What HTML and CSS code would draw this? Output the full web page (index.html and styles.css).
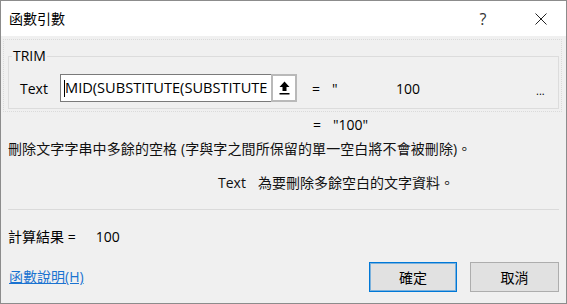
FILE: index.html
```html
<!DOCTYPE html>
<html lang="zh-Hant">
<head>
<meta charset="utf-8">
<title>函數引數</title>
<link rel="stylesheet" href="styles.css">
</head>
<body>
<div class="dialog">
  <div class="titlebar">
    <span class="title">函數引數</span>
    <span class="help">?</span>
    <span class="close">
      <svg width="12" height="12" viewBox="0 0 12 12"><path d="M0.5 0.5 L11.5 11.5 M11.5 0.5 L0.5 11.5" stroke="#222" stroke-width="1" fill="none"/></svg>
    </span>
  </div>

  <div class="focus">
    <fieldset class="group">
      <legend>TRIM</legend>
      <div class="arg">
        <span class="arg-name">Text</span>
        <div class="ref">
          <span class="ref-text"><span class="caret"></span>MID(SUBSTITUTE(SUBSTITUTE</span>
          <span class="ref-btn">
            <svg width="11" height="14" viewBox="0 0 11 14"><path d="M5.5 0.5 L10.5 6 H7.5 V10 H3.5 V6 H0.5 Z" fill="#000"/><rect x="0.5" y="12" width="10" height="1.5" fill="#000"/></svg>
          </span>
        </div>
        <span class="eq">=</span>
        <span class="quote">"</span>
        <span class="num">100</span>
        <span class="more">...</span>
      </div>
    </fieldset>
  </div>

  <div class="result"><span class="eq">=</span><span>"100"</span></div>

  <p class="desc">刪除文字字串中多餘的空格 (字與字之間所保留的單一空白將不會被刪除)。</p>
  <p class="arg-desc"><span class="arg-label">Text</span>為要刪除多餘空白的文字資料。</p>

  <div class="sep"></div>

  <div class="calc"><span>計算結果 =</span><span class="calc-val">100</span></div>

  <div class="footer">
    <a class="help-link" href="#">函數說明(H)</a>
    <button class="btn btn-default">確定</button>
    <button class="btn">取消</button>
  </div>
</div>
</body>
</html>
```

FILE: styles.css
```css
* { margin: 0; padding: 0; box-sizing: border-box; }
html, body { background: #f0f0f0; }
body { font-family: "Open Sans", "Noto Sans CJK TC", sans-serif; font-size: 14px; color: #000; }

.dialog { width: 567px; height: 304px; border: 1px solid #8c8c8c; background: #f0f0f0; }

/* title bar */
.titlebar { height: 35px; background: #fff; display: flex; align-items: center; padding: 0 2px 0 8px; }
.title { flex: 1; font-size: 14px; line-height: 20px; color: #000; }
.help { width: 20px; text-align: center; font-size: 16px; line-height: 20px; color: #333; margin-right: 25px; }
.close { width: 46px; height: 35px; display: flex; align-items: center; justify-content: center; }

/* argument group */
.focus { margin: 3px 4px 0 2px; border: 1px dotted #dadada; padding: 8px 2px 2px 4px; }
.group { border: 1px solid #dcdcdc; margin: 0; padding: 0 0 6px 0; min-width: 0; }
.group legend { margin-left: 3px; padding: 0 1px; font-size: 14px; line-height: 16px; }
.arg { display: flex; align-items: center; height: 28px; margin-top: 10px; }
.arg-name { width: 40px; margin-left: 11px; }
.ref { display: flex; height: 28px; width: 237px; }
.ref-text { position: relative; width: 211px; height: 28px; background: #fff; border: 1px solid #7a7a7a; border-right: 0; padding-left: 3px; font-size: 14.6px; line-height: 25px; white-space: nowrap; overflow: hidden; }
.caret { display: inline-block; width: 1px; height: 17px; background: #000; vertical-align: -4px; margin-right: 0; }
.ref-btn { width: 26px; height: 28px; border: 2px solid #b9b9b9; background: #fff; display: flex; align-items: center; justify-content: center; }
.eq { width: 21px; padding-left: 1px; margin-left: 14px; }
.quote { width: 64px; }
.num { width: 140px; }
.more { font-size: 11px; padding-top: 4px; }

/* results and descriptions */
.result { display: flex; height: 20px; line-height: 20px; margin-top: 3px; padding-left: 297px; }
.desc { height: 20px; line-height: 20px; margin-top: 4px; padding-left: 7px; color: #111; letter-spacing: 0.1px; }
.arg-desc { height: 20px; line-height: 20px; margin-top: 14px; padding-left: 217px; color: #111; }
.arg-label { margin-right: 12px; }
.sep { height: 1px; background: #dadada; margin: 16px 7px 0 7px; }
.calc { height: 20px; line-height: 20px; margin-top: 17px; padding-left: 7px; }
.calc-val { margin-left: 20px; }

/* footer */
.footer { display: flex; align-items: center; height: 30px; margin-top: 15px; padding: 0 7px 0 8px; }
.help-link { flex: 1; color: #1a73d1; text-decoration: underline; line-height: 20px; }
.btn { width: 89px; height: 30px; margin-left: 13px; font-family: inherit; font-size: 14px; color: #000; background: #e1e1e1; border: 1px solid #adadad; }
.btn-default { width: 88px; margin-left: 0; border: 1px solid #0078d7; box-shadow: inset 0 0 0 1px rgba(0, 120, 215, 0.45); }
```
